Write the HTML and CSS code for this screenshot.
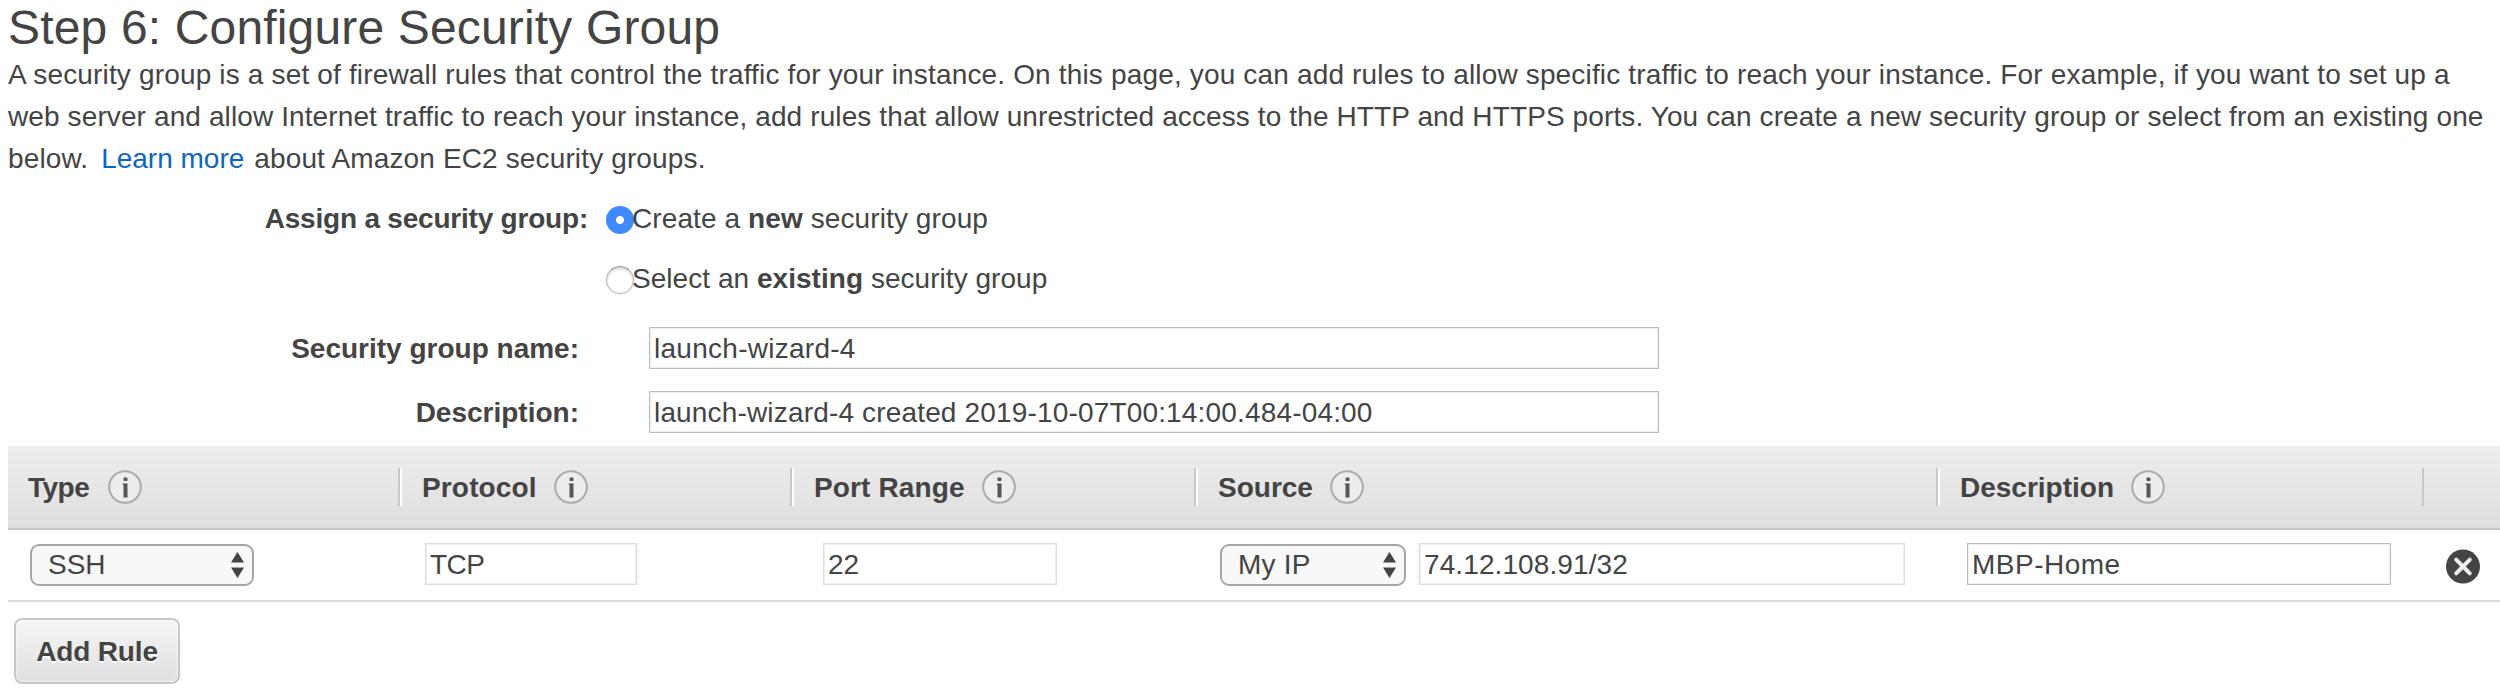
FILE: index.html
```html
<!DOCTYPE html>
<html lang="en">
<head>
<meta charset="utf-8">
<title>Configure Security Group</title>
<link rel="stylesheet" href="styles.css">
</head>
<body>
<svg class="sprite" width="0" height="0">
  <symbol id="info" viewBox="0 0 34 34">
    <circle cx="17" cy="17" r="15.8" fill="#ededed" stroke="#ababab" stroke-width="2"/>
    <rect x="15.500" y="7.500" width="4" height="3.500" rx="1" fill="#555"/>
    <path d="M14.800 13.500h4.700v14h-4v-12.500h-.700z" fill="#555"/>
  </symbol>
  <symbol id="arrows" viewBox="0 0 13 26">
    <path d="M0 10.500 6.500 0 13 10.500zM0 15.500 6.500 26 13 15.500z" fill="#444"/>
  </symbol>
</svg>
<h1 class="title">Step 6: Configure Security Group</h1>
<p class="intro">
  <span class="line t-l1">A security group is a set of firewall rules that control the traffic for your instance. On this page, you can add rules to allow specific traffic to reach your instance. For example, if you want to set up a</span>
  <span class="line t-l2">web server and allow Internet traffic to reach your instance, add rules that allow unrestricted access to the HTTP and HTTPS ports. You can create a new security group or select from an existing one</span>
  <span class="line t-l3">below. <a class="link">Learn more</a> about Amazon EC2 security groups.</span>
</p>
<section class="form">
  <div class="choice">
    <span class="choice-label"><b class="t-assign">Assign a security group:</b></span>
    <span class="radio radio-on"></span>
    <span class="choice-text t-new">Create a <b>new</b> security group</span>
  </div>
  <div class="choice">
    <span class="choice-label"></span>
    <span class="radio"></span>
    <span class="choice-text t-existing">Select an <b>existing</b> security group</span>
  </div>
  <div class="field first">
    <span class="field-label"><b>Security group name:</b></span>
    <div class="input wide"><span class="t-wiz">launch-wizard-4</span></div>
  </div>
  <div class="field">
    <span class="field-label"><b>Description:</b></span>
    <div class="input wide"><span class="t-created">launch-wizard-4 created 2019-10-07T00:14:00.484-04:00</span></div>
  </div>
</section>
<section class="rules">
  <div class="grid head">
    <div class="th"><b class="t-type">Type</b><svg class="info"><use href="#info"/></svg></div>
    <div class="th"><b class="t-proto">Protocol</b><svg class="info"><use href="#info"/></svg></div>
    <div class="th"><b class="t-port">Port Range</b><svg class="info"><use href="#info"/></svg></div>
    <div class="th"><b>Source</b><svg class="info"><use href="#info"/></svg></div>
    <div class="th"><b>Description</b><svg class="info"><use href="#info"/></svg></div>
    <div class="th"></div>
  </div>
  <div class="grid row">
    <div class="td c-type"><div class="select"><span>SSH</span><svg class="arrows"><use href="#arrows"/></svg></div></div>
    <div class="td c-proto"><div class="input ro"><span class="t-tcp">TCP</span></div></div>
    <div class="td c-port"><div class="input ro"><span>22</span></div></div>
    <div class="td c-source"><div class="select"><span class="t-myip">My IP</span><svg class="arrows"><use href="#arrows"/></svg></div><div class="input ro"><span class="t-ip">74.12.108.91/32</span></div></div>
    <div class="td c-desc"><div class="input"><span class="t-mbp">MBP-Home</span></div></div>
    <div class="td c-del"><svg class="remove" viewBox="0 0 34 34"><circle cx="17" cy="17" r="17" fill="#444"/><path d="M10.200 10.200 23.800 23.800M23.800 10.200 10.200 23.800" stroke="#eee" stroke-width="4" stroke-linecap="round"/></svg></div>
  </div>
</section>
<div class="button"><b class="t-add">Add Rule</b></div>
</body>
</html>
```
FILE: styles.css
```css
* { box-sizing: border-box; }
body {
  margin: 0;
  width: 2500px;
  height: 700px;
  overflow: hidden;
  background: #fff;
  color: #444;
  font: 28px/42px "Liberation Sans", Arial, sans-serif;
  white-space: nowrap;
}
.sprite { display: block; }
.title { margin: 0; padding: 0 8px; height: 54px; font-size: 48px; line-height: 56px; font-weight: 400; letter-spacing: .16px; }
.intro { margin: 0; padding: 0 8px; }
.line { display: block; width: max-content; }
.link { color: #1166bb; margin: 0 2px 0 5px; letter-spacing: 0; }

.t-l1 { letter-spacing: .163px; }
.t-l2 { letter-spacing: .112px; }
.t-l3 { letter-spacing: .14px; }
.t-assign { letter-spacing: -.21px; }
.t-new { letter-spacing: .1px; }
.t-existing { letter-spacing: .04px; }
.t-wiz { letter-spacing: .27px; }
.t-created { letter-spacing: .165px; }
.t-type { letter-spacing: -.5px; }
.t-proto { letter-spacing: .15px; }
.t-port { letter-spacing: .13px; }
.t-tcp { letter-spacing: -.5px; }
.t-myip { letter-spacing: .2px; }
.t-ip { letter-spacing: .1px; }
.t-mbp { letter-spacing: .5px; }
.t-add { letter-spacing: -.15px; }

.form { padding-top: 8px; }
.choice { display: flex; align-items: center; height: 60px; }
.choice-label { width: 588px; text-align: right; margin-right: 18px; padding-top: 2px; }
.choice-text { padding-top: 2px; }
.radio { width: 28px; height: 28px; border-radius: 50%; border: 1px solid #b5b5b5; border-top-color: #999; box-shadow: inset 0 2px 3px rgba(0,0,0,.18); margin: 4px -2px 0 0; }
.radio-on { border: 0; background: radial-gradient(circle, #fff 0 3.600px, #3f8bfd 4.400px); box-shadow: none; }
.field { display: flex; align-items: center; margin-top: 22px; height: 42px; }
.field.first { margin-top: 19px; }
.field-label { width: 579px; text-align: right; margin-right: 70px; padding-top: 2px; }
.input { height: 42px; line-height: 41px; border: 1px solid #bbb; box-shadow: inset 0 0 0 1px #eee; padding-left: 4px; background: #fff; }
.wide { width: 1010px; }
.ro { border-color: #ddd; }

.rules { margin: 13px 0 0 8px; }
.grid { display: grid; grid-template-columns: 392px 392px 404px 742px 486px 76px; }
.head { height: 84px; background: linear-gradient(#eee, #dedede); border-bottom: 2px solid #c8c8c8; padding-top: 22px; }
.th { height: 38px; display: flex; align-items: center; padding-left: 22px; border-right: 2px solid #c8c8c8; box-shadow: 2px 0 #fff; }
.th b { padding-top: 2px; }
.th:first-child { padding-left: 20px; }
.th:nth-child(5) { box-shadow: none; }
.th:last-child { border: 0; box-shadow: none; }
.info { width: 34px; height: 34px; margin-left: 17px; }
.th:first-child .info { margin-left: 19px; }
.row { height: 72px; border-bottom: 2px solid #ddd; padding-top: 13px; }
.td { display: flex; align-items: flex-start; }
.select { display: flex; justify-content: space-between; align-items: center; margin-top: 1px; height: 42px; line-height: 38px; border: 2px solid #a6a6a6; border-radius: 9px; background: #f8f8f8; padding: 0 8px 0 16px; }
.arrows { width: 13px; height: 26px; }
.c-type { padding-left: 22px; }
.c-type .select { width: 224px; }
.c-proto { padding-left: 25px; }
.c-proto .input { width: 212px; }
.c-port { padding-left: 31px; }
.c-port .input { width: 234px; }
.c-source { padding-left: 24px; gap: 13px; }
.c-source .select { width: 186px; }
.c-source .input { width: 486px; }
.c-desc { padding-left: 29px; }
.c-desc .input { width: 424px; }
.c-del { padding: 6px 0 0 22px; }
.remove { width: 34px; height: 35px; }
.button { margin: 16px 0 0 14px; width: 166px; height: 66px; border: 2px solid #c8c8c8; border-radius: 8px; background: linear-gradient(#f6f6f6, #dfdfdf); box-shadow: inset 0 0 3px #fff; text-shadow: 0 2px #fff; text-align: center; line-height: 64px; }
```
